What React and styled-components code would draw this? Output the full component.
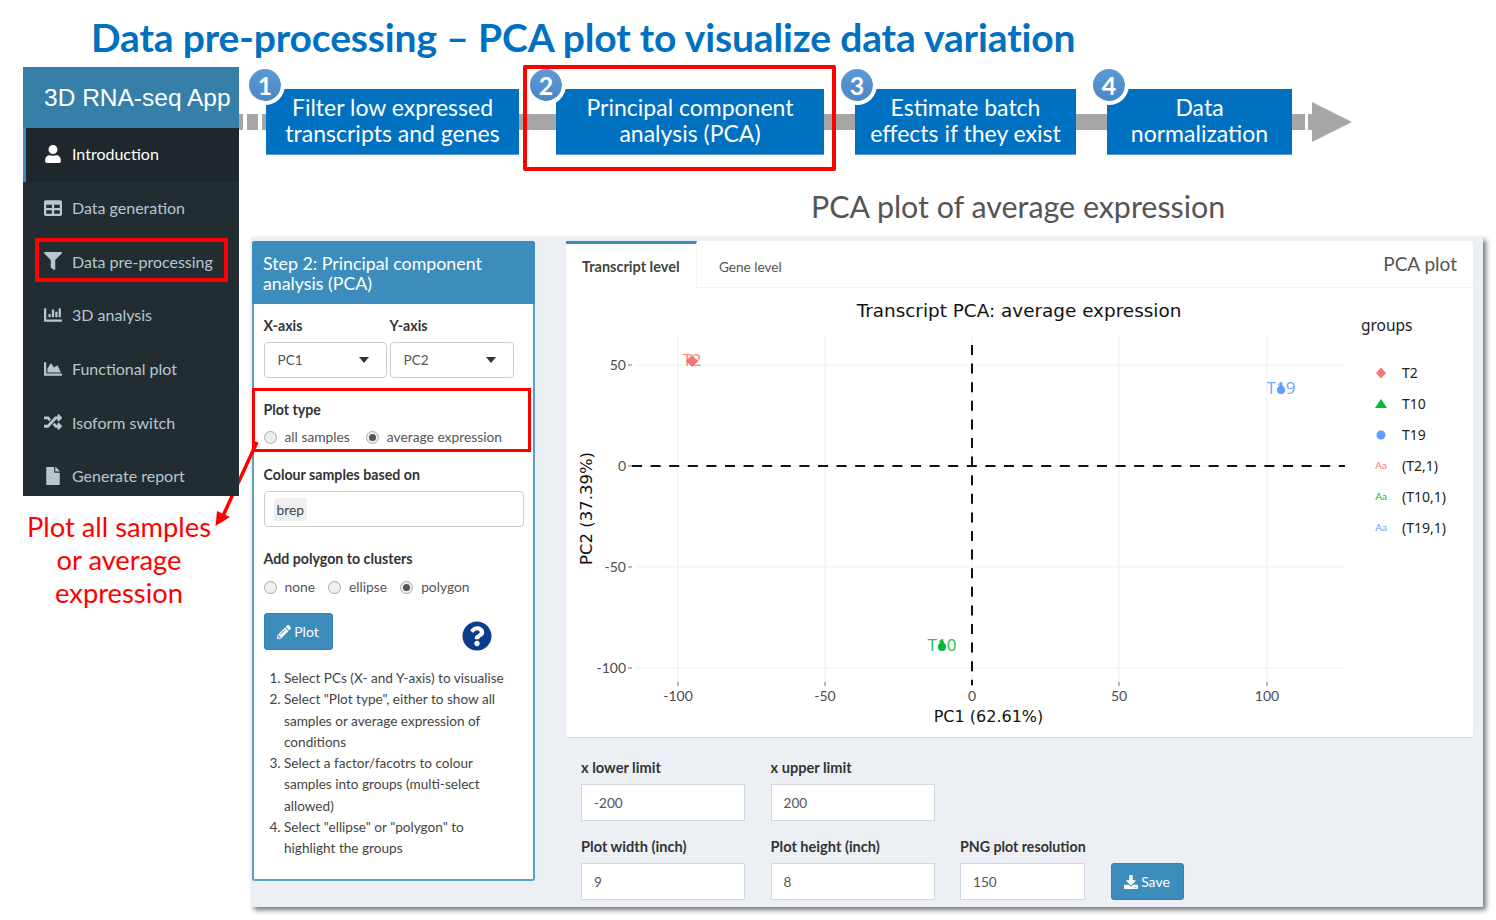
import React from "react"
import styled, { createGlobalStyle } from "styled-components"
import { FaUser, FaTable, FaFilter, FaChartBar, FaChartArea, FaRandom, FaFile, FaPencilAlt, FaDownload, FaQuestionCircle } from "react-icons/fa"

const Global = createGlobalStyle`
    html, body { margin: 0; padding: 0; background: #fff; }
    * { box-sizing: border-box; }
    body { font-family: Lato, "Liberation Sans", sans-serif; color: #333; }
`

const Page = styled.div`
    position: relative;
    width: 1496px;
    height: 920px;
    overflow: hidden;
    background: #fff;
`
const Title = styled.h1`
    margin: 0;
    height: 67px;
    padding: 14px 0 0 91px;
    font-size: 39px;
    line-height: 46px;
    font-weight: 700;
    letter-spacing: -0.14px;
    color: #0070c0;
    white-space: nowrap;
`
const Columns = styled.div`
    display: flex;
    padding-left: 23px;
`
const LeftColumn = styled.div`
    width: 216px;
    flex: none;
`
const Sidebar = styled.nav`
    position: relative;
    z-index: 2;
    background: #222d32;
    height: 429px;
`
const Brand = styled.div`
    height: 61px;
    background: #367fa9;
    color: #fff;
    font-family: "Liberation Sans", sans-serif;
    font-size: 24.5px;
    line-height: 61px;
    padding-left: 21px;
    white-space: nowrap;
`
const MenuItem = styled.div`
    position: relative;
    display: flex;
    align-items: center;
    height: 53.7px;
    padding: 0 0 2px 18px;
    gap: 10px;
    font-size: 16px;
    color: ${p => (p.$active ? "#fff" : "#b8c7ce")};
    background: ${p => (p.$active ? "#1e282c" : "transparent")};
    border-left: 3px solid ${p => (p.$active ? "#3c8dbc" : "transparent")};
    svg { width: 18px; height: 18px; flex: none; }
`
const SideHighlight = styled.div`
    position: absolute;
    left: 9px;
    right: 11px;
    top: 3px;
    height: 44px;
    border: 4px solid #f00;
    border-radius: 1px;
`
const Note = styled.p`
    margin: 14px 24px 0 0;
    text-align: center;
    color: #f00;
    font-size: 27.3px;
    line-height: 33px;
    white-space: nowrap;
`
const RightColumn = styled.div`
    flex: 1;
    min-width: 0;
`
const Pipeline = styled.div`
    position: relative;
    display: flex;
    height: 105px;
    padding: 22px 0 0 27px;
`
const Bar = styled.div`
    position: absolute;
    left: 0;
    top: 47px;
    width: 1073px;
    height: 16px;
    background: linear-gradient(90deg, #a6a6a6 0 4px, #fff 4px 8px, #a6a6a6 8px 19px, #fff 19px 23px, #a6a6a6 23px 1066px, #fff 1066px 1069px, #a6a6a6 1069px);
`
const Arrowhead = styled.div`
    position: absolute;
    left: 1073px;
    top: 35px;
    width: 40px;
    height: 40px;
    background: #a6a6a6;
    clip-path: polygon(0 0, 100% 50%, 0 100%);
`
const Step = styled.div`
    position: relative;
    width: ${p => p.$w}px;
    margin-right: ${p => p.$gap}px;
    height: 66px;
    flex: none;
    background: #0070c0;
    border-bottom: 1px solid #5b9bd5;
    padding-top: 5px;
`
const StepText = styled.div`
    color: #fff;
    font-size: 23px;
    line-height: 26px;
    text-align: center;
    white-space: nowrap;
`
const Badge = styled.div`
    position: absolute;
    left: ${p => p.$x}px;
    top: -24px;
    width: 40px;
    height: 40px;
    border-radius: 50%;
    background: linear-gradient(#5b9bd5, #4a86c5);
    border: 4px solid #fff;
    border-color: transparent #fff #fff transparent;
    background-clip: padding-box;
    color: #fff;
    font-size: 25px;
    font-weight: 700;
    line-height: 32px;
    text-align: center;
`
const StepHighlight = styled.div`
    position: absolute;
    left: 284px;
    top: -2px;
    width: 313px;
    height: 106px;
    border: 4px solid #f00;
    border-radius: 2px;
`
const PlotHeading = styled.h2`
    margin: 0;
    height: 65px;
    padding: 14px 0 0 572px;
    font-size: 30.4px;
    line-height: 40px;
    font-weight: 400;
    color: #555;
    white-space: nowrap;
`
const Panel = styled.div`
    display: flex;
    margin-left: 12px;
    width: 1232px;
    height: 670px;
    padding: 4px 0 0 1px;
    background: #ecf0f5;
    box-shadow: 3px 3px 5px rgba(0, 0, 0, 0.55);
`
const FormBox = styled.section`
    width: 283px;
    height: 640px;
    flex: none;
    background: #fff;
    border: 2px solid #5c9fc9;
    border-top: 0;
    border-radius: 3px;
    font-size: 14px;
`
const FormHeader = styled.div`
    margin: 0 -2px;
    height: 63px;
    padding: 12px 11px 0;
    background: #3c8dbc;
    color: #fff;
    font-size: 17.8px;
    line-height: 20px;
    border-radius: 3px 3px 0 0;
`
const FormBody = styled.div`
    position: relative;
    padding: 13px 10px 0 9.5px;
`
const SelectRow = styled.div`
    display: grid;
    grid-template-columns: 126px 124px;
`
const Label = styled.div`
    font-size: 14.2px;
    line-height: 18px;
    font-weight: 700;
    color: #333;
    white-space: nowrap;
    margin-bottom: ${p => p.$mb ?? 7}px;
`
const LimitLabel = styled(Label)`
    font-size: 14.6px;
`
const SelectBox = styled.div`
    position: relative;
    width: ${p => p.$w}px;
    height: 36px;
    padding-left: 13px;
    border: 1px solid #ccc;
    border-radius: 4px;
    line-height: 35px;
    font-size: 13.6px;
    color: #555;
    &::after {
        content: "";
        position: absolute;
        right: 17px;
        top: 14px;
        border: 5.5px solid transparent;
        border-top: 6px solid #333;
        border-bottom: 0;
    }
`
const PlotTypeGroup = styled.div`
    position: relative;
    margin-top: 23px;
`
const GroupHighlight = styled.div`
    position: absolute;
    left: -11.5px;
    top: -13px;
    width: 279px;
    height: 64px;
    border: 3px solid #f00;
`
const RadioRow = styled.div`
    display: flex;
    align-items: center;
    height: 18px;
    color: #555;
    line-height: 18px;
    font-size: 13.8px;
`
const RadioDot = styled.span`
    position: relative;
    width: 13px;
    height: 13px;
    flex: none;
    border-radius: 50%;
    background: #eee;
    border: 1px solid #aaa;
    margin-right: 8px;
    &::after {
        content: "";
        display: ${p => (p.$on ? "block" : "none")};
        position: absolute;
        inset: 2px;
        border-radius: 50%;
        background: #555;
    }
`
const RadioText = styled.span`
    margin-right: ${p => p.$gap}px;
    white-space: nowrap;
`
const FieldGroup = styled.div`
    margin-top: ${p => p.$mt}px;
`
const TagInput = styled.div`
    width: 260px;
    height: 36px;
    padding: 6px 9px;
    border: 1px solid #ccc;
    border-radius: 4px;
`
const Tag = styled.span`
    display: inline-block;
    height: 23px;
    padding: 0 3px;
    background: #efefef;
    border-radius: 3px;
    line-height: 23px;
    font-size: 13.8px;
    color: #444;
`
const ActionRow = styled.div`
    display: flex;
    justify-content: space-between;
    align-items: center;
    margin-top: 16px;
    padding-right: 31px;
`
const Button = styled.button`
    display: inline-flex;
    align-items: center;
    justify-content: center;
    gap: 3px;
    width: ${p => p.$w}px;
    height: 37px;
    padding: 0;
    background: #3c8dbc;
    border: 1px solid #367fa9;
    border-radius: 3px;
    color: #fff;
    font-family: inherit;
    font-size: 14px;
    svg { width: 14px; height: 14px; }
`
const HelpIcon = styled(FaQuestionCircle)`
    width: 30px;
    height: 30px;
    color: #0b3d8c;
    margin-top: 9px;
`
const Steps = styled.ol`
    margin: 17px 0 0;
    padding: 0 15px 0 20.5px;
    font-size: 13.6px;
    line-height: 21.3px;
    color: #444;
`
const MainColumn = styled.div`
    width: 907px;
    margin-left: 31px;
    flex: none;
`
const PlotCard = styled.section`
    height: 496px;
    background: #fff;
    border-radius: 3px;
    box-shadow: 0 1px 1px rgba(0, 0, 0, 0.1);
`
const TabBar = styled.div`
    display: flex;
    align-items: stretch;
    height: 47px;
    border-bottom: 1px solid #f4f4f4;
`
const Tab = styled.div`
    height: ${p => (p.$active ? 47 : 46)}px;
    width: ${p => p.$w}px;
    padding-left: ${p => (p.$active ? 16 : 22)}px;
    font-size: ${p => (p.$active ? 14.5 : 13.6)}px;
    font-weight: ${p => (p.$active ? 700 : 400)};
    color: ${p => (p.$active ? "#444" : "#555")};
    background: ${p => (p.$active ? "#fff" : "transparent")};
    border-top: 3px solid ${p => (p.$active ? "#3c8dbc" : "transparent")};
    border-right: 1px solid ${p => (p.$active ? "#f4f4f4" : "transparent")};
    line-height: 46px;
    white-space: nowrap;
`
const TabTitle = styled.div`
    margin-left: auto;
    padding: 0 16px 0 0;
    font-size: 19px;
    line-height: 46px;
    color: #555;
`
const ChartSvg = styled.svg`
    display: block;
    width: 907px;
    height: 449px;
`
const LimitGrid = styled.div`
    display: grid;
    grid-template-columns: 164px 164px 125px 73px;
    column-gap: 25.5px;
    padding: 22px 0 0 15px;
`
const LimitField = styled.div`
    height: 79px;
`
const SaveCell = styled.div`
    padding-top: 25px;
`
const NumberInput = styled.div`
    height: 37px;
    padding-left: 12px;
    background: #fff;
    border: 1px solid #d2d6de;
    font-size: 13.6px;
    line-height: 36px;
    color: #555;
`
const RedArrow = styled.svg`
    position: absolute;
    left: 200px;
    top: 430px;
    width: 60px;
    height: 110px;
    z-index: 1;
`

const menu = [
    { label: "Introduction", Icon: FaUser, active: true },
    { label: "Data generation", Icon: FaTable },
    { label: "Data pre-processing", Icon: FaFilter, marked: true },
    { label: "3D analysis", Icon: FaChartBar },
    { label: "Functional plot", Icon: FaChartArea },
    { label: "Isoform switch", Icon: FaRandom },
    { label: "Generate report", Icon: FaFile },
]

const stages = [
    { n: 1, w: 253, gap: 37, x: -21, lines: ["Filter low expressed", "transcripts and genes"] },
    { n: 2, w: 268, gap: 31, x: -30, lines: ["Principal component", "analysis (PCA)"] },
    { n: 3, w: 221, gap: 31, x: -18, lines: ["Estimate batch", "effects if they exist"] },
    { n: 4, w: 185, gap: 0, x: -18, lines: ["Data", "normalization"] },
]

const howTo = [
    "Select PCs (X- and Y-axis) to visualise",
    "Select \"Plot type\", either to show all samples or average expression of conditions",
    "Select a factor/facotrs to colour samples into groups (multi-select allowed)",
    "Select \"ellipse\" or \"polygon\" to highlight the groups",
]

const gridX = [678, 825, 972, 1119, 1267]
const gridY = [365, 466, 567, 668]
const xTicks = ["-100", "-50", "0", "50", "100"]
const yTicks = ["50", "0", "-50", "-100"]

const RED = "#f8766d"
const GREEN = "#00ba38"
const BLUE = "#619cff"
const PLOT_FONT = "'DejaVu Sans', sans-serif"

function Chart() {
    const tick = { fontFamily: "Lato, sans-serif", fontSize: 14, fill: "#4d4d4d" }
    const legend = { fontFamily: "'Noto Sans', sans-serif", fontSize: 14, fill: "#222" }
    const point = { fontFamily: "'Noto Sans', sans-serif", fontSize: 17, textAnchor: "middle", opacity: 0.85 }
    return (
        <ChartSvg viewBox="566 288 907 449">
            {gridX.map(x => <line key={x} x1={x} x2={x} y1={336} y2={685} stroke="#f0f0f0" strokeWidth="1.2" />)}
            {gridY.map(y => <line key={y} x1={636} x2={1345} y1={y} y2={y} stroke="#f0f0f0" strokeWidth="1.2" />)}
            {gridX.map((x, i) => (
                <g key={x}>
                    <line x1={x} x2={x} y1={682} y2={686} stroke="#777" />
                    <text x={x} y={701} textAnchor="middle" {...tick}>{xTicks[i]}</text>
                </g>
            ))}
            {gridY.map((y, i) => (
                <g key={y}>
                    <line x1={628} x2={632} y1={y} y2={y} stroke="#777" />
                    <text x={626} y={y + 5} textAnchor="end" {...tick}>{yTicks[i]}</text>
                </g>
            ))}
            <line x1={632} x2={1345} y1={466} y2={466} stroke="#111" strokeWidth="2" strokeDasharray="10 8.6" />
            <line x1={972} x2={972} y1={345} y2={685} stroke="#111" strokeWidth="2" strokeDasharray="10 8.6" />

            <text x={1019} y={317} textAnchor="middle" fontFamily={PLOT_FONT} fontSize="18.4" fill="#111">Transcript PCA: average expression</text>
            <text x={988.5} y={722} textAnchor="middle" fontFamily={PLOT_FONT} fontSize="16" fill="#111">PC1 (62.61%)</text>
            <text transform="translate(592 508.5) rotate(-90)" textAnchor="middle" fontFamily={PLOT_FONT} fontSize="16.5" fill="#111">PC2 (37.39%)</text>

            <text x={692} y={366} fill={RED} {...point}>T2</text>
            <polygon points="692,355 698,361 692,367 686,361" fill={RED} />
            <text x={1281} y={394} fill={BLUE} {...point}>T19</text>
            <circle cx={1281} cy={390} r={4} fill={BLUE} />
            <polygon points="1281,383 1285,389 1277,389" fill={BLUE} />
            <text x={942} y={651} fill={GREEN} {...point}>T10</text>
            <circle cx={942} cy={647} r={4} fill={GREEN} />
            <polygon points="942,639 946,646 938,646" fill={GREEN} />

            <text x={1361} y={331} fontFamily="'Noto Sans', sans-serif" fontSize="15.5" fill="#222">groups</text>
            <polygon points="1381,367.5 1386,373 1381,378.5 1376,373" fill={RED} />
            <polygon points="1381,399 1387,408 1375,408" fill={GREEN} />
            <circle cx={1381} cy={435} r={4.5} fill={BLUE} />
            <text x={1381} y={469} textAnchor="middle" fontSize="10" fontFamily="Lato, sans-serif" fill={RED}>Aa</text>
            <text x={1381} y={500} textAnchor="middle" fontSize="10" fontFamily="Lato, sans-serif" fill={GREEN}>Aa</text>
            <text x={1381} y={531} textAnchor="middle" fontSize="10" fontFamily="Lato, sans-serif" fill={BLUE}>Aa</text>
            <text x={1402} y={378} {...legend}>T2</text>
            <text x={1402} y={409} {...legend}>T10</text>
            <text x={1402} y={440} {...legend}>T19</text>
            <text x={1402} y={470.5} {...legend}>(T2,1)</text>
            <text x={1402} y={501.5} {...legend}>(T10,1)</text>
            <text x={1402} y={532.5} {...legend}>(T19,1)</text>
        </ChartSvg>
    )
}

export default function App() {
    return (
        <Page>
            <Global />
            <Title>Data pre-processing – PCA plot to visualize data variation</Title>
            <Columns>
                <LeftColumn>
                    <Sidebar>
                        <Brand>3D RNA-seq App</Brand>
                        {menu.map(({ label, Icon, active, marked }) => (
                            <MenuItem key={label} $active={active}>
                                <Icon />{label}
                                {marked && <SideHighlight />}
                            </MenuItem>
                        ))}
                    </Sidebar>
                    <Note>Plot all samples<br />or average<br />expression</Note>
                </LeftColumn>
                <RightColumn>
                    <Pipeline>
                        <Bar />
                        <Arrowhead />
                        {stages.map(s => (
                            <Step key={s.n} $w={s.w} $gap={s.gap}>
                                <Badge $x={s.x}>{s.n}</Badge>
                                <StepText>{s.lines[0]}<br />{s.lines[1]}</StepText>
                            </Step>
                        ))}
                        <StepHighlight />
                    </Pipeline>
                    <PlotHeading>PCA plot of average expression</PlotHeading>
                    <Panel>
                        <FormBox>
                            <FormHeader>Step 2: Principal component analysis (PCA)</FormHeader>
                            <FormBody>
                                <SelectRow>
                                    <div>
                                        <Label>X-axis</Label>
                                        <SelectBox $w={123}>PC1</SelectBox>
                                    </div>
                                    <div>
                                        <Label>Y-axis</Label>
                                        <SelectBox $w={124}>PC2</SelectBox>
                                    </div>
                                </SelectRow>
                                <PlotTypeGroup>
                                    <GroupHighlight />
                                    <Label $mb={9}>Plot type</Label>
                                    <RadioRow>
                                        <RadioDot /><RadioText $gap={16}>all samples</RadioText>
                                        <RadioDot $on /><RadioText $gap={0}>average expression</RadioText>
                                    </RadioRow>
                                </PlotTypeGroup>
                                <FieldGroup $mt={20}>
                                    <Label $mb={7}>Colour samples based on</Label>
                                    <TagInput><Tag>brep</Tag></TagInput>
                                </FieldGroup>
                                <FieldGroup $mt={23}>
                                    <Label $mb={10}>Add polygon to clusters</Label>
                                    <RadioRow>
                                        <RadioDot /><RadioText $gap={13}>none</RadioText>
                                        <RadioDot /><RadioText $gap={13}>ellipse</RadioText>
                                        <RadioDot $on /><RadioText $gap={0}>polygon</RadioText>
                                    </RadioRow>
                                </FieldGroup>
                                <ActionRow>
                                    <Button $w={69}><FaPencilAlt />Plot</Button>
                                    <HelpIcon />
                                </ActionRow>
                                <Steps>
                                    {howTo.map(t => <li key={t}>{t}</li>)}
                                </Steps>
                            </FormBody>
                        </FormBox>
                        <MainColumn>
                            <PlotCard>
                                <TabBar>
                                    <Tab $active $w={131}>Transcript level</Tab>
                                    <Tab $w={120}>Gene level</Tab>
                                    <TabTitle>PCA plot</TabTitle>
                                </TabBar>
                                <Chart />
                            </PlotCard>
                            <LimitGrid>
                                <LimitField><LimitLabel>x lower limit</LimitLabel><NumberInput>-200</NumberInput></LimitField>
                                <LimitField><LimitLabel>x upper limit</LimitLabel><NumberInput>200</NumberInput></LimitField>
                                <LimitField />
                                <LimitField />
                                <LimitField><LimitLabel>Plot width (inch)</LimitLabel><NumberInput>9</NumberInput></LimitField>
                                <LimitField><LimitLabel>Plot height (inch)</LimitLabel><NumberInput>8</NumberInput></LimitField>
                                <LimitField><Label>PNG plot resolution</Label><NumberInput>150</NumberInput></LimitField>
                                <SaveCell><Button $w={73}><FaDownload />Save</Button></SaveCell>
                            </LimitGrid>
                        </MainColumn>
                    </Panel>
                </RightColumn>
            </Columns>
            <RedArrow viewBox="200 430 60 110">
                <line x1="257" y1="442" x2="222" y2="518" stroke="#f00" strokeWidth="3.5" />
                <polygon points="215.5,526 217,511 230,517" fill="#f00" />
            </RedArrow>
        </Page>
    )
}
